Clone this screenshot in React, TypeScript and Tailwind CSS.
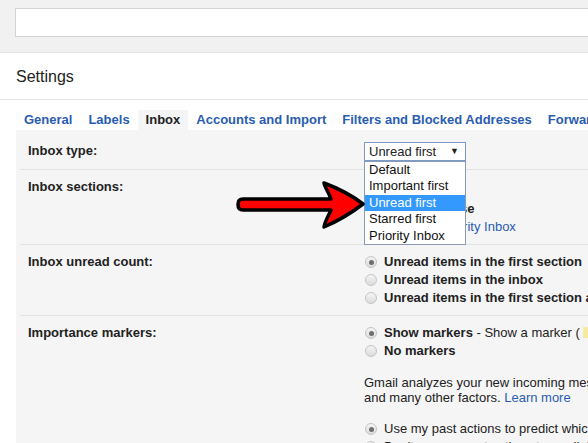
import type { ReactNode } from "react";

const TABS = [
  "General",
  "Labels",
  "Inbox",
  "Accounts and Import",
  "Filters and Blocked Addresses",
  "Forwarding and POP/IMAP",
];

const TYPES = ["Default", "Important first", "Unread first", "Starred first", "Priority Inbox"];

function Radio({ checked }: { checked?: boolean }) {
  return (
    <span className="flex h-[12px] w-[12px] shrink-0 items-center justify-center rounded-full border border-[#c4c4c4] bg-gradient-to-b from-[#f4f4f4] to-[#dcdcdc]">
      {checked && <span className="h-[5px] w-[5px] rounded-full bg-[#6f6f6f]" />}
    </span>
  );
}

function Option({ checked, children }: { checked?: boolean; children: ReactNode }) {
  return (
    <div className="flex h-[18px] items-center gap-[7px] whitespace-nowrap pl-[1px]">
      <Radio checked={checked} />
      <span>{children}</span>
    </div>
  );
}

function Row({
  label,
  first,
  children,
}: {
  label: string;
  first?: boolean;
  children: ReactNode;
}) {
  return (
    <div
      className={`ml-1 grid grid-cols-[344px_1fr] ${
        first ? "pt-[12px] pb-2" : "border-t border-[#e3e3e3] py-2"
      }`}
    >
      <div className="pl-2 font-bold leading-[18px] text-[#222]">{label}</div>
      <div className="min-w-0">{children}</div>
    </div>
  );
}

export default function App() {
  return (
    <div
      className="relative h-[443px] w-[588px] overflow-hidden bg-white text-[13px] text-[#222]"
      style={{ fontFamily: '"Liberation Sans", Arial, sans-serif' }}
    >
      {/* search bar */}
      <div className="h-[53px] overflow-hidden border-b border-[#e5e5e5] bg-[#f1f1f1] pt-2">
        <div className="ml-[15px] h-[29px] w-[640px] border border-[#d3d3d3] bg-white" />
      </div>

      <div className="h-[47px] border-b border-[#e5e5e5] pl-4 pt-[14px] text-[16px] leading-[20px]">
        Settings
      </div>

      {/* tabs */}
      <div className="mt-[10px] flex whitespace-nowrap pl-4 font-bold leading-[20px]">
        {TABS.map((t) => (
          <div
            key={t}
            className={`px-2 ${t === "Inbox" ? "bg-[#f5f5f5] text-[#222]" : "text-[#2a5db0]"}`}
          >
            {t}
          </div>
        ))}
      </div>

      {/* panel */}
      <div className="ml-4 bg-[#f5f5f5] pb-10">
        <Row label="Inbox type:" first>
          <div className="relative w-[102px]">
            <div className="flex h-[19px] items-center justify-between border border-[#7a9acc] bg-white pl-1 pr-[6px]">
              <span>Unread first</span>
              <span className="text-[9px]">▼</span>
            </div>
            <div className="absolute left-0 top-[19px] z-10 w-[102px] border border-[#8c9bb4] bg-white">
              {TYPES.map((t) => (
                <div
                  key={t}
                  className={`h-[16.4px] pl-1 leading-[16.4px] ${
                    t === "Unread first" ? "bg-[#3399ff] text-white" : "text-[#111]"
                  }`}
                >
                  {t}
                </div>
              ))}
            </div>
          </div>
        </Row>

        <Row label="Inbox sections:">
          <div className="whitespace-nowrap pt-1 leading-[18px]">
            <div className="font-bold">1. Unread</div>
            <div className="font-bold">2. Everything else</div>
            <div className="pl-[3px] text-[#2a5db0]">Learn about Priority Inbox</div>
          </div>
        </Row>

        <Row label="Inbox unread count:">
          <div className="font-bold">
            <Option checked>Unread items in the first section</Option>
            <Option>Unread items in the inbox</Option>
            <Option>Unread items in the first section and the rest of the inbox</Option>
          </div>
        </Row>

        <Row label="Importance markers:">
          <Option checked>
            <b>Show markers</b> - Show a marker ({" "}
            <span className="inline-block h-[11px] w-[13px] bg-[#f7e9a0] align-[-1px]" /> ) by
            messages marked as important.
          </Option>
          <Option>
            <b>No markers</b>
          </Option>
          <div className="mt-[15px] whitespace-nowrap leading-[15px]">
            <div>
              Gmail analyzes your new incoming messages to predict what's important, considering
              things like how you've treated similar messages in the past,
            </div>
            <div>
              and many other factors. <span className="text-[#2a5db0]">Learn more</span>
            </div>
          </div>
          <div className="mt-[15px]">
            <Option checked>Use my past actions to predict which messages are important to me.</Option>
            <Option>Don't use my past actions to predict which messages are important.</Option>
          </div>
        </Row>
      </div>

      {/* red arrow annotation */}
      <svg
        className="pointer-events-none absolute left-0 top-0 z-20"
        width="588"
        height="443"
        viewBox="0 0 588 443"
      >
        <path
          d="M243 199 L331 199 C329 193 325 188 324 183 C340 189 354 197 363 204 C354 211 340 220 324 227 C325 221 329 215 331 210 L243 210 Q238 210 238 204.5 Q238 199 243 199 Z"
          fill="#ff0000"
          stroke="#000"
          strokeWidth="3.5"
          strokeLinejoin="round"
        />
      </svg>
    </div>
  );
}
